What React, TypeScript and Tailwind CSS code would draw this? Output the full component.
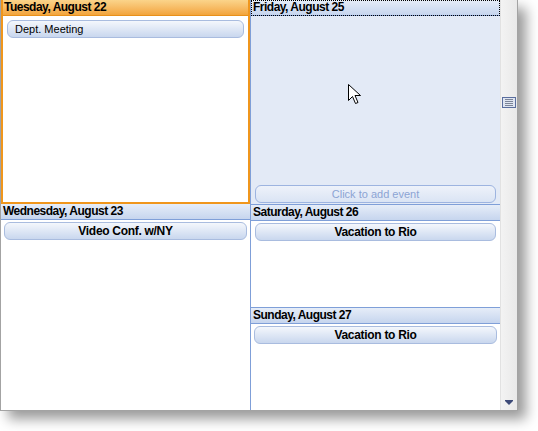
import React from 'react';

const font = { fontFamily: '"Liberation Sans", Arial, sans-serif' };

function DayHeader({ label, active, focused }: { label: string; active?: boolean; focused?: boolean }) {
  return (
    <div
      className={
        'h-[16px] shrink-0 border-b text-[12px] font-bold leading-[15px] tracking-[-0.5px] text-black ' +
        (active
          ? 'border-[#e8901a] bg-gradient-to-b from-[#fbd48a] to-[#f2a43a] px-[1px]'
          : 'border-[#7f9fd8] bg-gradient-to-b from-[#e6edf8] to-[#c6d5ee] px-[2px]') +
        (focused ? ' outline outline-1 outline-dotted outline-black -outline-offset-1' : '')
      }
    >
      {label}
    </div>
  );
}

function EventPill({ title, bold = true, muted, className = '' }: { title: string; bold?: boolean; muted?: boolean; className?: string }) {
  return (
    <div
      className={
        'h-[18px] rounded-[6px] border leading-[16px] ' +
        (muted
          ? 'border-[#9db4e0] bg-gradient-to-b from-[#eef2fa] to-[#dae4f4] text-center text-[#8ca4d4] '
          : 'border-[#a9bcdf] bg-gradient-to-b from-[#f4f7fc] to-[#c9d7ee] text-black ') +
        (bold ? 'text-center text-[12px] font-bold tracking-[-0.3px] ' : 'pl-[7px] text-[11px] ') +
        className
      }
    >
      {title}
    </div>
  );
}

export default function App() {
  return (
    <div className="h-[431px] w-[538px] bg-white" style={font}>
      <div className="relative flex h-[411px] w-[518px] border-b border-l border-r border-[#a3a3a3] bg-white shadow-[8px_8px_12px_rgba(0,0,0,0.4)]">
        {/* left column */}
        <div className="flex w-[250px] flex-col border-r border-[#7f9fd8]">
          <div className="flex h-[204px] flex-col border-2 border-t-0 border-[#f0961c]">
            <DayHeader label="Tuesday, August 22" active />
            <div className="px-[4px] pt-[4px]">
              <EventPill title="Dept. Meeting" bold={false} />
            </div>
          </div>
          <div className="flex flex-1 flex-col">
            <DayHeader label="Wednesday, August 23" />
            <div className="px-[3px] pt-[2px]">
              <EventPill title="Video Conf. w/NY" />
            </div>
          </div>
        </div>

        {/* right column */}
        <div className="flex w-[249px] flex-col">
          <div className="flex h-[205px] flex-col border-b border-[#7f9fd8] bg-[#e3eaf6]">
            <DayHeader label="Friday, August 25" focused />
            <div className="flex-1" />
            <div className="px-[4px] pb-[1px]">
              <EventPill title="Click to add event" bold={false} muted className="!pl-0 text-center" />
            </div>
          </div>
          <div className="flex h-[103px] flex-col border-b border-[#7f9fd8]">
            <DayHeader label="Saturday, August 26" />
            <div className="px-[4px] pt-[2px]">
              <EventPill title="Vacation to Rio" />
            </div>
          </div>
          <div className="flex flex-1 flex-col">
            <DayHeader label="Sunday, August 27" />
            <div className="px-[3px] pt-[2px]">
              <EventPill title="Vacation to Rio" />
            </div>
          </div>
        </div>

        {/* scrollbar */}
        <div className="flex w-[17px] flex-col items-center border-l border-[#e2e2e2] bg-gradient-to-r from-[#f3f3f3] to-[#e9e9e9]">
          <div className="mt-[97px] flex h-[11px] w-[14px] flex-col justify-center gap-[1px] border border-[#5a6e9e] bg-[#dfe5f1] px-[2px]">
            <div className="h-px bg-[#7c8598]" />
            <div className="h-px bg-[#7c8598]" />
            <div className="h-px bg-[#7c8598]" />
            <div className="h-px bg-[#7c8598]" />
          </div>
          <div className="flex-1" />
          <svg width="8" height="5" viewBox="0 0 8 5" className="mb-[5px]">
            <path d="M0 0h8v1L4 5 0 1z" fill="#3d4a78" />
          </svg>
        </div>

        {/* mouse cursor */}
        <svg width="14" height="22" viewBox="0 0 14 22" className="absolute left-[347px] top-[84px]">
          <path d="M0.5 0.5v16l4-4 3 7 2.5-1-3-7h5.5z" fill="#fff" stroke="#000" strokeWidth="1" />
        </svg>
      </div>
    </div>
  );
}
